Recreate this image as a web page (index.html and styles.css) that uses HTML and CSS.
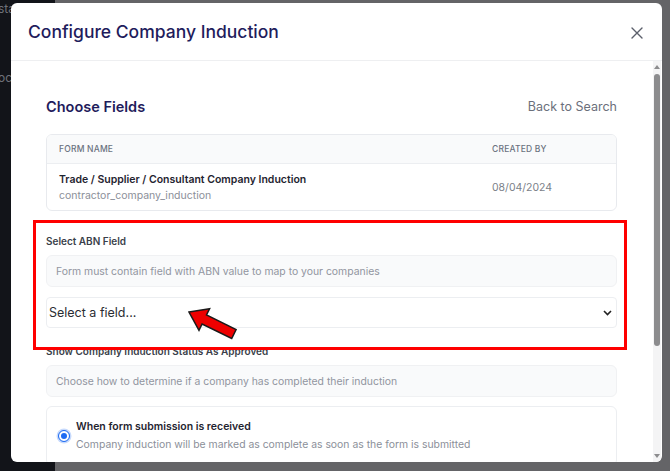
FILE: index.html
```html
<!DOCTYPE html>
<html lang="en">
<head>
  <meta charset="UTF-8" />
  <title>Configure Company Induction</title>
  <link rel="stylesheet" href="styles.css">
</head>
<body>
  <div class="backdrop">
    <div class="sidebar">
      <span class="side-text t1">sta</span>
      <span class="side-text t2">oc</span>
    </div>
    <div class="page"></div>
  </div>

  <div class="modal">
    <div class="modal-header">
      <h1>Configure Company Induction</h1>
      <button class="close" aria-label="Close">
        <svg width="12" height="12" viewBox="0 0 12 12"><path d="M1 1L11 11M11 1L1 11" stroke="#5b5f6b" stroke-width="1.4" stroke-linecap="round"/></svg>
      </button>
    </div>

    <div class="modal-body">
      <div class="content">
        <div class="section-head">
          <h2>Choose Fields</h2>
          <a class="back">Back to Search</a>
        </div>

        <div class="table">
          <div class="row head">
            <span class="col-name">FORM NAME</span>
            <span class="col-by">CREATED BY</span>
          </div>
          <div class="row">
            <div class="col-name">
              <div class="form-title">Trade / Supplier / Consultant Company Induction</div>
              <div class="form-key">contractor_company_induction</div>
            </div>
            <div class="col-by date">08/04/2024</div>
          </div>
        </div>

        <label class="field-label first">Select ABN Field</label>
        <div class="hint">Form must contain field with ABN value to map to your companies</div>
        <div class="select">
          <span>Select a field...</span>
          <svg width="9" height="6" viewBox="0 0 9 6"><path d="M1 1L4.5 4.5L8 1" stroke="#222" stroke-width="1.6" fill="none"/></svg>
        </div>

        <label class="field-label second">Show Company Induction Status As Approved</label>
        <div class="hint">Choose how to determine if a company has completed their induction</div>

        <div class="option">
          <span class="radio"></span>
          <div>
            <div class="option-title">When form submission is received</div>
            <div class="option-desc">Company induction will be marked as complete as soon as the form is submitted</div>
          </div>
        </div>
      </div>

      <div class="scrollbar">
        <span class="arrow up"></span>
        <span class="thumb"></span>
        <span class="arrow down"></span>
      </div>
    </div>
  </div>

  <div class="highlight"></div>
  <svg class="pointer" width="70" height="50" viewBox="0 0 70 50">
    <polygon points="9,12 29.6,8.7 26.5,15 56.1,29.5 51.7,38.5 22.1,24 19,30.3" fill="#ee0000" stroke="#1a1a1a" stroke-width="1.5" stroke-linejoin="miter"/>
  </svg>
</body>
</html>
```

FILE: styles.css
```css
* {
  box-sizing: border-box;
}

body {
  margin: 0;
  width: 670px;
  height: 471px;
  overflow: hidden;
  font-family: Inter, "Noto Sans", sans-serif;
  background: #636366;
}

.backdrop {
  display: flex;
  height: 471px;
}

.sidebar {
  position: relative;
  width: 55px;
  background: #121419;
}

.side-text {
  position: absolute;
  left: -2px;
  color: #6f727a;
  font-size: 12px;
}

.t1 { top: 1px; }
.t2 { top: 70px; }

.page {
  flex: 1;
  background: #646467;
}

.modal {
  position: absolute;
  left: 11px;
  top: 3px;
  width: 651px;
  height: 459px;
  background: #fff;
  border-radius: 6px;
  overflow: hidden;
  display: flex;
  flex-direction: column;
}

.modal-header {
  height: 58px;
  flex: none;
  display: flex;
  align-items: center;
  justify-content: space-between;
  padding: 0 19px 0 17px;
  border-bottom: 1px solid #eeeff1;
}

.modal-header h1 {
  margin: 0;
  font-size: 17.5px;
  font-weight: 500;
  color: #1f1c5c;
}

.close {
  background: none;
  border: none;
  padding: 0;
  display: flex;
  margin-top: 2px;
}

.modal-body {
  flex: 1;
  display: flex;
  min-height: 0;
}

.content {
  flex: 1;
  padding: 35px 36px 0 35px;
  overflow: hidden;
}

.section-head {
  display: flex;
  justify-content: space-between;
  align-items: center;
  height: 20px;
}

.section-head h2 {
  margin: 0;
  font-size: 14.5px;
  font-weight: 600;
  color: #1f1c5c;
}

.back {
  font-size: 12.5px;
  color: #6b6f7b;
}

.table {
  margin-top: 18px;
  border: 1px solid #e8eaee;
  border-radius: 6px;
  overflow: hidden;
}

.row {
  display: flex;
  align-items: center;
  padding: 0 12px;
  height: 46px;
}

.row.head {
  height: 29px;
  background: #f9fafb;
  border-bottom: 1px solid #eceef1;
  font-size: 8.5px;
  font-weight: 500;
  color: #6b7280;
  letter-spacing: 0.2px;
}

.col-name {
  flex: 1;
}

.col-by {
  width: 112px;
}

.form-title {
  font-size: 10.5px;
  font-weight: 600;
  color: #1f2430;
}

.form-key {
  margin-top: 3px;
  font-size: 10.5px;
  color: #8b8f99;
}

.date {
  font-size: 10.5px;
  color: #7b7f89;
}

.field-label {
  display: block;
  font-size: 10px;
  font-weight: 600;
  color: #3a3f4a;
  line-height: 14px;
}

.first {
  margin-top: 23px;
}

.second {
  margin-top: 16px;
}

.hint {
  margin-top: 7px;
  height: 32px;
  display: flex;
  align-items: center;
  padding: 0 9px;
  background: #f9fafb;
  border: 1px solid #f0f1f3;
  border-radius: 6px;
  font-size: 10.4px;
  color: #9195a0;
}

.select {
  margin-top: 10px;
  height: 31px;
  display: flex;
  align-items: center;
  justify-content: space-between;
  padding: 0 4px 0 2px;
  border: 1px solid #eceef1;
  border-radius: 4px;
  font-size: 12.5px;
  color: #2a2d33;
}

.option {
  margin-top: 9px;
  height: 60px;
  display: flex;
  align-items: center;
  gap: 7px;
  padding: 0 11px 1px 12px;
  border: 1px solid #eceef1;
  border-radius: 6px;
}

.radio {
  flex: none;
  width: 10px;
  height: 10px;
  border-radius: 50%;
  background: #1d6bf3;
  border: 2px solid #fff;
  outline: 1px solid #1d6bf3;
  box-shadow: 0 0 0 2.5px #c7dafc;
}

.option-title {
  font-size: 10.5px;
  font-weight: 600;
  color: #1f2430;
}

.option-desc {
  margin-top: 5px;
  font-size: 10.4px;
  color: #8b8f99;
}

.scrollbar {
  width: 8px;
  flex: none;
  margin-right: 1px;
  background: #f4f4f5;
  display: flex;
  flex-direction: column;
  align-items: center;
  padding: 4px 0;
}

.thumb {
  width: 6px;
  height: 272px;
  margin-top: 5px;
  background: #8c8c8e;
  border-radius: 3px;
}

.arrow {
  width: 0;
  height: 0;
  border-left: 3.5px solid transparent;
  border-right: 3.5px solid transparent;
}

.arrow.up {
  border-bottom: 4px solid #8c8c8e;
}

.arrow.down {
  margin-top: auto;
  border-top: 4px solid #8c8c8e;
}

.highlight {
  position: absolute;
  left: 33px;
  top: 220px;
  width: 594px;
  height: 130px;
  border: 3px solid #ff0000;
}

.pointer {
  position: absolute;
  left: 180px;
  top: 300px;
}
```
